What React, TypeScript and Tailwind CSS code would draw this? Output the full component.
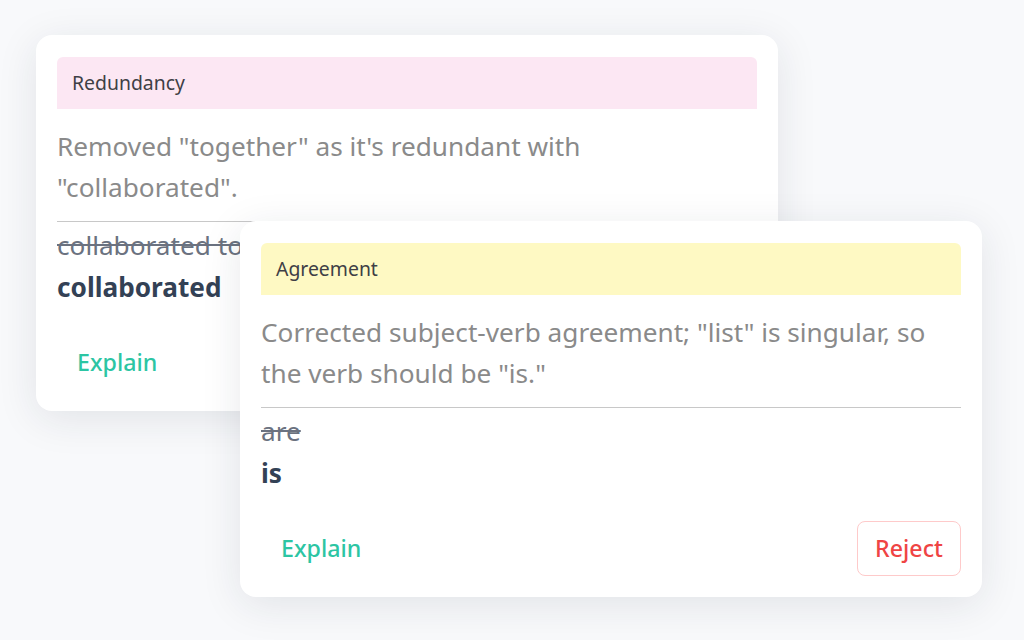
import React from "react";

type Card = {
  tag: string;
  tagBg: string;
  desc: React.ReactNode;
  from: string;
  to: string;
  reject: boolean;
};

function SuggestionCard({ tag, tagBg, desc, from, to, reject }: Card) {
  return (
    <div className="w-[742px] h-[376px] bg-white rounded-[16px] shadow-[0_8px_40px_rgba(30,41,59,0.10)] px-[21px] pt-[22px] pb-[21px] flex flex-col">
      <div className={`${tagBg} rounded-t-[6px] h-[52px] flex items-center px-[15px] text-[19.4px] text-[#3f3f46]`}>
        {tag}
      </div>
      <p className="mt-[17px] text-[26.2px] leading-[41px] text-[#8a8a8a]">{desc}</p>
      <div className="mt-[13px] border-t border-[#c8c8c8]" />
      <div className="mt-[5px] text-[26.2px] leading-[36px] text-[#6b7280] line-through whitespace-nowrap">{from}</div>
      <div className="mt-[6px] text-[26.2px] leading-[36px] font-bold text-[#334155]">{to}</div>
      <div className="mt-auto flex items-center justify-between">
        <button className="h-[55px] px-[19px] border border-transparent rounded-[8px] text-[23.2px] text-[#2cc5a3] font-medium">
          Explain
        </button>
        {reject && (
          <button className="h-[55px] w-[104px] border border-[#fecaca] rounded-[8px] text-[23.2px] text-[#ef4444] font-medium">
            Reject
          </button>
        )}
      </div>
    </div>
  );
}

export default function App() {
  return (
    <div
      className="relative w-[1024px] h-[640px] overflow-hidden bg-[#f8f9fb]"
      style={{ fontFamily: '"Noto Sans", sans-serif' }}
    >
      <div className="absolute left-[36px] top-[35px]">
        <SuggestionCard
          tag="Redundancy"
          tagBg="bg-[#fce7f3]"
          desc={<>Removed "together" as it's redundant with<br />"collaborated".</>}
          from="collaborated together"
          to="collaborated"
          reject={true}
        />
      </div>
      <div className="absolute left-[240px] top-[221px]">
        <SuggestionCard
          tag="Agreement"
          tagBg="bg-[#fef9c3]"
          desc={<>Corrected subject-verb agreement; "list" is singular, so<br />the verb should be "is."</>}
          from="are"
          to="is"
          reject={true}
        />
      </div>
    </div>
  );
}
